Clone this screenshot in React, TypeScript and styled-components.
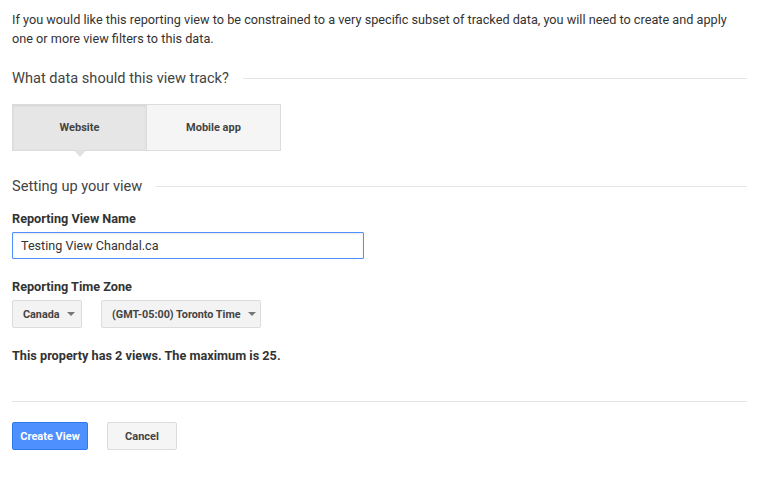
import React from "react";
import styled, { createGlobalStyle } from "styled-components";

const GlobalStyle = createGlobalStyle`
  html, body {
    margin: 0;
    background: #fff;
  }
  body {
    font-family: Roboto, "Liberation Sans", Arial, sans-serif;
    color: #333;
  }
`;

const Page = styled.div`
  padding: 10px 21px 0 12px;
  display: flex;
  flex-direction: column;
`;

const Intro = styled.p`
  margin: 0;
  font-size: 12.7px;
  line-height: 19px;
  color: #333;
`;

const SectionHead = styled.div<{ top: number }>`
  display: flex;
  align-items: center;
  gap: 14px;
  margin-top: ${(p) => p.top}px;
  height: 20px;
  font-size: 14.6px;
  color: #444;
  white-space: nowrap;

  &::after {
    content: "";
    flex: 1;
    height: 1px;
    background: #e5e5e5;
  }
`;

const Toggle = styled.div`
  display: flex;
  margin-top: 16px;
  width: 269px;
`;

const ToggleItem = styled.div<{ active?: boolean }>`
  position: relative;
  flex: 1;
  height: 45px;
  display: flex;
  align-items: center;
  justify-content: center;
  font-size: 11px;
  font-weight: 700;
  color: #444;
  background: ${(p) => (p.active ? "#e6e6e6" : "#f5f5f5")};
  border: 1px solid #dcdcdc;
  & + & {
    border-left: none;
  }
  ${(p) =>
    p.active &&
    `
    box-shadow: inset 0 1px 2px rgba(0,0,0,0.08);
    &::after {
      content: "";
      position: absolute;
      left: 50%;
      bottom: -7px;
      transform: translateX(-50%);
      border-left: 6px solid transparent;
      border-right: 6px solid transparent;
      border-top: 7px solid #e0e0e0;
    }
  `}
`;

const Label = styled.div<{ top: number }>`
  margin-top: ${(p) => p.top}px;
  font-size: 12.7px;
  line-height: 18px;
  font-weight: 700;
  color: #333;
`;

const TextInput = styled.input`
  margin-top: 4px;
  box-sizing: border-box;
  width: 352px;
  height: 27px;
  padding: 0 8px;
  font-family: inherit;
  font-size: 12.6px;
  color: #333;
  border: 1px solid #4d90fe;
  border-radius: 1px;
  outline: none;
  box-shadow: inset 0 1px 2px rgba(0, 0, 0, 0.1);
`;

const SelectRow = styled.div`
  display: flex;
  gap: 19px;
  margin-top: 4px;
`;

const Select = styled.div<{ w: number }>`
  box-sizing: border-box;
  width: ${(p) => p.w}px;
  height: 28px;
  display: flex;
  align-items: center;
  gap: 7px;
  padding: 0 0 0 10px;
  font-size: 10.8px;
  font-weight: 700;
  color: #444;
  background: #f3f3f3;
  border: 1px solid #dcdcdc;
  border-radius: 2px;
  white-space: nowrap;
`;

const Caret = styled.span`
  width: 0;
  height: 0;
  border-left: 4px solid transparent;
  border-right: 4px solid transparent;
  border-top: 4px solid #777;
`;

const Note = styled.div`
  margin-top: 19px;
  font-size: 12.7px;
  font-weight: 700;
  line-height: 18px;
  color: #333;
`;

const Divider = styled.hr`
  margin: 36px 0 0;
  border: none;
  height: 1px;
  background: #e5e5e5;
`;

const Actions = styled.div`
  display: flex;
  gap: 19px;
  margin-top: 20px;
`;

const Button = styled.button<{ primary?: boolean }>`
  box-sizing: border-box;
  height: 28px;
  width: ${(p) => (p.primary ? 76 : 70)}px;
  padding: 0;
  font-family: inherit;
  font-size: 11px;
  font-weight: 700;
  border-radius: 2px;
  color: ${(p) => (p.primary ? "#fff" : "#444")};
  background: ${(p) => (p.primary ? "#4d90fe" : "#f5f5f5")};
  border: 1px solid ${(p) => (p.primary ? "#3079ed" : "#dcdcdc")};
`;

export default function App() {
  return (
    <>
      <GlobalStyle />
      <Page>
        <Intro>
          If you would like this reporting view to be constrained to a very specific subset of tracked data, you will
          need to create and apply one or more view filters to this data.
        </Intro>

        <SectionHead top={20}>What data should this view track?</SectionHead>
        <Toggle>
          <ToggleItem active>Website</ToggleItem>
          <ToggleItem>Mobile app</ToggleItem>
        </Toggle>

        <SectionHead top={25}>Setting up your view</SectionHead>
        <Label top={14}>Reporting View Name</Label>
        <TextInput defaultValue="Testing View Chandal.ca" />

        <Label top={19}>Reporting Time Zone</Label>
        <SelectRow>
          <Select w={70}>
            Canada <Caret />
          </Select>
          <Select w={160}>
            (GMT-05:00) Toronto Time <Caret />
          </Select>
        </SelectRow>

        <Note>This property has 2 views. The maximum is 25.</Note>
        <Divider />
        <Actions>
          <Button primary>Create View</Button>
          <Button>Cancel</Button>
        </Actions>
      </Page>
    </>
  );
}
